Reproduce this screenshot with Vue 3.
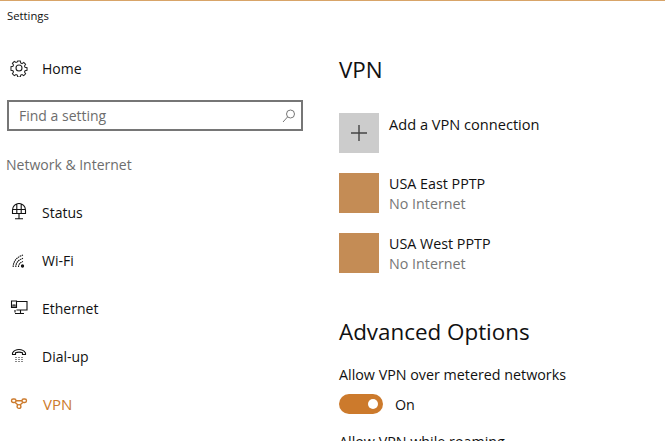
<template>
  <div class="window">
    <div class="titlebar">Settings</div>
    <div class="columns">
      <aside class="sidebar">
        <div class="nav-item home">
          <svg class="nav-icon" viewBox="0 0 18 18" fill="none" stroke="#222" stroke-width="1.1">
            <circle cx="9" cy="9" r="3" />
            <path d="M7.6 1.6h2.800l.4 2.100 1.400.6 1.800-1.200 2 2-1.200 1.800.6 1.400 2.100.4v2.800l-2.100.4-.6 1.400 1.200 1.800-2 2-1.800-1.200-1.400.6-.4 2.100H7.600l-.4-2.100-1.400-.6-1.800 1.200-2-2 1.200-1.800-.6-1.400-2.100-.4V7.600l2.100-.4.6-1.400-1.200-1.800 2-2 1.800 1.200 1.400-.6z" transform="translate(.5 .5) scale(.945)" />
          </svg>
          <span>Home</span>
        </div>
        <div class="search">
          <span>Find a setting</span>
          <svg class="search-icon" viewBox="0 0 14 14" fill="none" stroke="#777" stroke-width="1">
            <circle cx="8.500" cy="5" r="4" />
            <path d="M5.600 7.900 1 13" />
          </svg>
        </div>
        <div class="group-title">Network &amp; Internet</div>
        <div v-for="item in navItems" :key="item.label" :class="['nav-item', { active: item.active }]">
          <svg class="nav-icon" viewBox="0 0 18 18" fill="none" stroke="currentColor" :stroke-width="item.active ? 1.4 : 1.1" v-html="item.icon"></svg>
          <span>{{ item.label }}</span>
        </div>
      </aside>
      <main class="content">
        <h1>VPN</h1>
        <div class="row add">
          <div class="tile grey">
            <svg viewBox="0 0 40 40" width="40" height="40" stroke="#444" stroke-width="1.4">
              <path d="M20 12v16M12 20h16" />
            </svg>
          </div>
          <div class="row-text wide">Add a VPN connection</div>
        </div>
        <div v-for="conn in connections" :key="conn" class="row">
          <div class="tile"></div>
          <div class="row-text">
            <div>{{ conn }}</div>
            <div class="sub">No Internet</div>
          </div>
        </div>
        <h2>Advanced Options</h2>
        <div class="option">Allow VPN over metered networks</div>
        <div class="toggle-row">
          <div class="toggle"><i class="knob"></i></div>
          <span>On</span>
        </div>
        <div class="option cut">Allow VPN while roaming</div>
      </main>
    </div>
  </div>
</template>

<script setup>
const navItems = [
  {
    label: 'Status',
    icon: '<path d="M2.500 10.500V7a6.500 6.500 0 0 1 13 0v3.500zM2.500 6.500h13M6.800 1.200v9.300M11.200 1.200v9.300M9 10.500v5M5 15.800h8"/>',
  },
  {
    label: 'Wi-Fi',
    icon: '<path d="M3.200 16c0-5.500 3.500-10 9.800-12M5.800 16c0-4 2.500-7.200 7.200-8.800M8.500 16c0-2.500 1.700-4.600 4.500-5.600" stroke-dasharray="1.600 .6"/><circle cx="12.500" cy="15" r="1.100" fill="currentColor"/>',
  },
  {
    label: 'Ethernet',
    icon: '<path d="M6.500 2.500h10.500v8.500H6.500M1.500 2h5v6.500h-5zM3 8.500V6h2v2.500M5 11v2.500M10.500 11v3M5 14.500h9"/>',
  },
  {
    label: 'Dial-up',
    icon: '<path d="M2.500 7.500V6C4 3.500 6 2.500 9 2.500s5 1 6.500 3.500v1.500h-3V5.700c-2-.7-5-.7-7 0v1.800z"/><path d="M5.500 10.500h1M8.500 10.500h1M11.500 10.500h1M5.500 12.500h1M8.500 12.500h1M11.500 12.500h1M5.500 14.500h1M8.500 14.500h1M11.500 14.500h1"/>',
  },
  {
    label: 'VPN',
    active: true,
    icon: '<rect x="1.500" y="4" width="4.500" height="3.500" rx="1.700"/><rect x="12" y="4" width="4.500" height="3.500" rx="1.700"/><circle cx="9" cy="11.500" r="1.900"/><path d="M6 5.700h6M5.200 7.500 8 10M12.800 7.500 10 10"/>',
  },
];

const connections = ['USA East PPTP', 'USA West PPTP'];
</script>

<style>
html,
body {
  margin: 0;
  background: #fff;
}
</style>

<style scoped>
.window {
  width: 665px;
  height: 441px;
  overflow: hidden;
  box-sizing: border-box;
  border-top: 1px solid #d8a468;
  background: #fff;
  color: #111;
  font-family: "Open Sans", "Noto Sans", sans-serif;
  font-size: 14px;
}
.titlebar {
  height: 30px;
  padding-left: 7px;
  font-size: 11.3px;
  line-height: 30px;
}
.columns {
  display: flex;
}
.sidebar {
  width: 339px;
  flex: none;
}
.nav-item {
  display: flex;
  align-items: center;
  height: 48px;
  padding-left: 10px;
  gap: 14px;
}
.nav-item.home {
  height: 28px;
  margin: 23px 0 18px;
}
.nav-item.active {
  color: #cc7a2c;
  font-size: 15px;
  gap: 15px;
}
.nav-icon {
  width: 18px;
  height: 18px;
  flex: none;
}
.search {
  width: 296px;
  height: 31px;
  margin-left: 7px;
  box-sizing: border-box;
  border: 2px solid #767676;
  display: flex;
  align-items: center;
  justify-content: space-between;
  padding: 0 5px 0 10px;
  color: #6d6d6d;
}
.search-icon {
  width: 14px;
  height: 14px;
}
.group-title {
  margin: 24px 0 0 6px;
  height: 33px;
  color: #6d6d6d;
  line-height: 20px;
}
.content {
  flex: 1;
  padding-top: 23px;
  font-size: 14.3px;
}
h1,
h2 {
  margin: 0;
  font-weight: 400;
  font-size: 22.4px;
  line-height: 32px;
}
.row {
  display: flex;
  gap: 10px;
  height: 40px;
  margin-bottom: 20px;
}
.row.add {
  margin-top: 27px;
}
.tile {
  width: 40px;
  height: 40px;
  flex: none;
  background: #c48c55;
}
.tile.grey {
  background: #cccccc;
}
.row-text {
  padding-top: 1px;
  line-height: 20px;
}
.row-text.wide {
  font-size: 14.6px;
}
.sub {
  color: #767676;
}
h2 {
  margin-top: 43px;
}
.option {
  margin-top: 17px;
  line-height: 20px;
}
.toggle-row {
  display: flex;
  align-items: center;
  gap: 12px;
  margin-top: 9px;
}
.toggle {
  width: 44px;
  height: 20px;
  border-radius: 10px;
  background: #cc7a2c;
  display: flex;
  align-items: center;
  justify-content: flex-end;
  padding-right: 5px;
  box-sizing: border-box;
}
.knob {
  width: 10px;
  height: 10px;
  border-radius: 50%;
  background: #fff;
}
.option.cut {
  margin-top: 18px;
}
</style>
